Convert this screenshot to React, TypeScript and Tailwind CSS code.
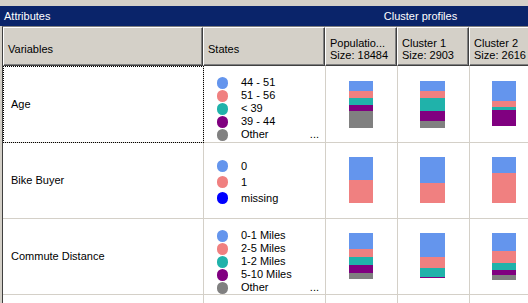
import React from "react";

type Seg = [string, number];

const BG: Record<string, string> = {
  blue: "bg-[#6495ed]",
  pink: "bg-[#f08080]",
  teal: "bg-[#20b2aa]",
  purple: "bg-[#800080]",
  gray: "bg-[#808080]",
  navy: "bg-[#0000ff]",
};

function Bar({ segs }: { segs: Seg[] }) {
  return (
    <div className="flex flex-col w-[24px]">
      {segs.map(([c, h], i) => (
        <div key={i} className={BG[c]} style={{ height: h }} />
      ))}
    </div>
  );
}

type RowProps = {
  name: string;
  items: [string, string][];
  leading: string;
  legendPt: string;
  more: boolean;
  barPt: string;
  bars: Seg[][];
  h: string;
  focus?: boolean;
};

function Row({ name, items, leading, legendPt, more, barPt, bars, h, focus }: RowProps) {
  return (
    <div className={`relative flex shrink-0 border-b border-[#d4d0c8] ${h}`}>
      <div className="w-[200px] shrink-0 flex items-center pl-[8px]">{name}</div>
      <div className={`w-[122px] shrink-0 border-l border-[#d4d0c8] flex flex-col pl-[13px] ${legendPt} ${leading}`}>
        {items.map(([c, label], i) => (
          <div key={i} className="flex items-center">
            <div className={`w-[11px] h-[12px] rounded-full shrink-0 ${BG[c]}`} />
            <span className="ml-[13px]">{label}</span>
            {more && i === items.length - 1 ? <span className="ml-auto pr-[6px]">...</span> : null}
          </div>
        ))}
      </div>
      <div className={`w-[72px] shrink-0 border-l border-[#d4d0c8] pl-[23px] ${barPt}`}>
        <Bar segs={bars[0]} />
      </div>
      <div className={`w-[72px] shrink-0 border-l border-[#d4d0c8] pl-[22px] ${barPt}`}>
        <div className="w-[25px]">
          <div className="flex flex-col w-[25px]">
            {bars[1].map(([c, hh], i) => (
              <div key={i} className={BG[c]} style={{ height: hh }} />
            ))}
          </div>
        </div>
      </div>
      <div className={`w-[72px] shrink-0 border-l border-[#d4d0c8] pl-[22px] ${barPt}`}>
        <Bar segs={bars[2]} />
      </div>
      {focus ? (
        <div className="absolute left-0 top-0 w-[201px] h-[77px] border border-dotted border-black" />
      ) : null}
    </div>
  );
}

const headCell =
  "h-full shrink-0 bg-[#d4d0c8] border border-t-white border-l-white border-r-[#404040] border-b-[#404040] shadow-[inset_-1px_-1px_0_#808080] pl-[4px] pt-[4px] flex items-center leading-[12px]";

export default function App() {
  return (
    <div className="w-[528px] h-[303px] overflow-hidden bg-[#d4d0c8] pt-[6px] flex flex-col font-['Liberation_Sans',Arial,sans-serif] text-[11px] text-black">
      <div className="h-[20px] shrink-0 bg-[#0a246a] text-white flex items-center">
        <div className="w-[325px] shrink-0 pl-[4px]">Attributes</div>
        <div className="flex-1 text-center pr-[12px]">Cluster profiles</div>
      </div>
      <div className="flex-1 ml-[2px] border-l border-t border-l-[#404040] border-t-[#808080] flex flex-col overflow-hidden">
        <div className="h-[39px] shrink-0 flex">
          <div className={`${headCell} w-[200px]`}>Variables</div>
          <div className={`${headCell} w-[122px]`}>States</div>
          <div className={`${headCell} w-[72px]`}>
            <div>
              <div>Populatio...</div>
              <div>Size: 18484</div>
            </div>
          </div>
          <div className={`${headCell} w-[72px]`}>
            <div>
              <div>Cluster 1</div>
              <div>Size: 2903</div>
            </div>
          </div>
          <div className={`${headCell} w-[72px]`}>
            <div>
              <div>Cluster 2</div>
              <div>Size: 2616</div>
            </div>
          </div>
        </div>
        <div className="flex-1 bg-white flex flex-col">
          <Row
            name="Age"
            h="h-[77px]"
            focus
            leading="leading-[13px]"
            legendPt="pt-[10px]"
            more
            barPt="pt-[15px]"
            items={[
              ["blue", "44 - 51"],
              ["pink", "51 - 56"],
              ["teal", "< 39"],
              ["purple", "39 - 44"],
              ["gray", "Other"],
            ]}
            bars={[
              [["blue", 10], ["pink", 7], ["teal", 7], ["purple", 6], ["gray", 17]],
              [["blue", 10], ["pink", 7], ["teal", 13], ["purple", 10], ["gray", 7]],
              [["blue", 20], ["pink", 6], ["teal", 3], ["purple", 16]],
            ]}
          />
          <Row
            name="Bike Buyer"
            h="h-[76px]"
            leading="leading-[16px]"
            legendPt="pt-[15px]"
            more={false}
            barPt="pt-[14px]"
            items={[
              ["blue", "0"],
              ["pink", "1"],
              ["navy", "missing"],
            ]}
            bars={[
              [["blue", 23], ["pink", 23]],
              [["blue", 26], ["pink", 20]],
              [["blue", 16], ["pink", 30]],
            ]}
          />
          <Row
            name="Commute Distance"
            h="h-[76px]"
            leading="leading-[13px]"
            legendPt="pt-[10px]"
            more
            barPt="pt-[14px]"
            items={[
              ["blue", "0-1 Miles"],
              ["pink", "2-5 Miles"],
              ["teal", "1-2 Miles"],
              ["purple", "5-10 Miles"],
              ["gray", "Other"],
            ]}
            bars={[
              [["blue", 16], ["pink", 8], ["teal", 8], ["purple", 8], ["gray", 6]],
              [["blue", 24], ["pink", 11], ["teal", 9], ["purple", 1]],
              [["blue", 18], ["pink", 12], ["teal", 7], ["purple", 5], ["gray", 5]],
            ]}
          />
          <div className="flex-1 flex">
            <div className="w-[200px] shrink-0" />
            <div className="w-[122px] shrink-0 border-l border-[#d4d0c8]" />
            <div className="w-[72px] shrink-0 border-l border-[#d4d0c8]" />
            <div className="w-[72px] shrink-0 border-l border-[#d4d0c8]" />
            <div className="w-[72px] shrink-0 border-l border-[#d4d0c8]" />
          </div>
        </div>
      </div>
    </div>
  );
}
